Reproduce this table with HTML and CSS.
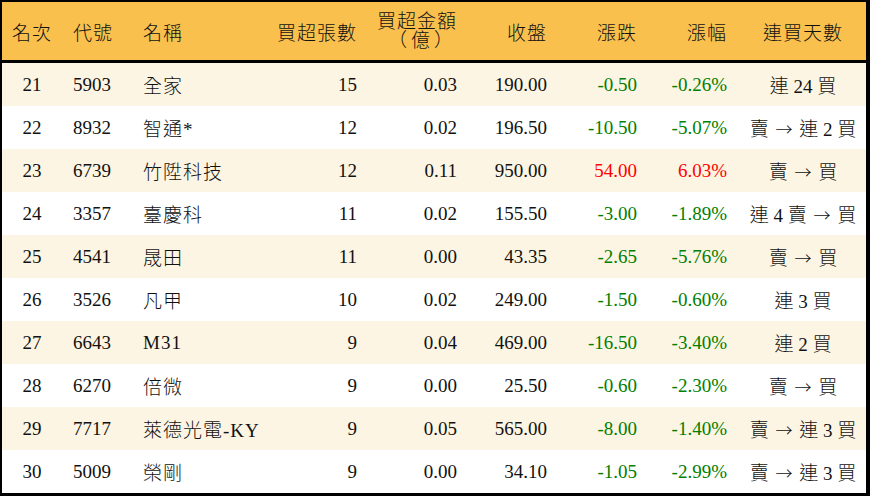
FILE: index.html
```html
<!DOCTYPE html>
<html lang="zh-Hant">
<head>
<meta charset="utf-8">
<title>買超排行</title>
<link rel="stylesheet" href="styles.css">
</head>
<body>
<div class="board">
  <div class="row head">
    <div class="c c1">名次</div>
    <div class="c c2">代號</div>
    <div class="c c3">名稱</div>
    <div class="c c4">買超張數</div>
    <div class="c c5 two"><span>買超金額</span><span class="unit">（億）</span></div>
    <div class="c c6">收盤</div>
    <div class="c c7">漲跌</div>
    <div class="c c8">漲幅</div>
    <div class="c c9">連買天數</div>
  </div>
  <div class="row alt">
    <div class="c c1">21</div><div class="c c2">5903</div><div class="c c3">全家</div><div class="c c4">15</div><div class="c c5">0.03</div><div class="c c6">190.00</div><div class="c c7 dn">-0.50</div><div class="c c8 dn">-0.26%</div><div class="c c9">連 24 買</div>
  </div>
  <div class="row">
    <div class="c c1">22</div><div class="c c2">8932</div><div class="c c3">智通*</div><div class="c c4">12</div><div class="c c5">0.02</div><div class="c c6">196.50</div><div class="c c7 dn">-10.50</div><div class="c c8 dn">-5.07%</div><div class="c c9">賣 <span class="arr">→</span> 連 2 買</div>
  </div>
  <div class="row alt">
    <div class="c c1">23</div><div class="c c2">6739</div><div class="c c3">竹陞科技</div><div class="c c4">12</div><div class="c c5">0.11</div><div class="c c6">950.00</div><div class="c c7 up">54.00</div><div class="c c8 up">6.03%</div><div class="c c9">賣 <span class="arr">→</span> 買</div>
  </div>
  <div class="row">
    <div class="c c1">24</div><div class="c c2">3357</div><div class="c c3">臺慶科</div><div class="c c4">11</div><div class="c c5">0.02</div><div class="c c6">155.50</div><div class="c c7 dn">-3.00</div><div class="c c8 dn">-1.89%</div><div class="c c9">連 4 賣 <span class="arr">→</span> 買</div>
  </div>
  <div class="row alt">
    <div class="c c1">25</div><div class="c c2">4541</div><div class="c c3">晟田</div><div class="c c4">11</div><div class="c c5">0.00</div><div class="c c6">43.35</div><div class="c c7 dn">-2.65</div><div class="c c8 dn">-5.76%</div><div class="c c9">賣 <span class="arr">→</span> 買</div>
  </div>
  <div class="row">
    <div class="c c1">26</div><div class="c c2">3526</div><div class="c c3">凡甲</div><div class="c c4">10</div><div class="c c5">0.02</div><div class="c c6">249.00</div><div class="c c7 dn">-1.50</div><div class="c c8 dn">-0.60%</div><div class="c c9">連 3 買</div>
  </div>
  <div class="row alt">
    <div class="c c1">27</div><div class="c c2">6643</div><div class="c c3">M31</div><div class="c c4">9</div><div class="c c5">0.04</div><div class="c c6">469.00</div><div class="c c7 dn">-16.50</div><div class="c c8 dn">-3.40%</div><div class="c c9">連 2 買</div>
  </div>
  <div class="row">
    <div class="c c1">28</div><div class="c c2">6270</div><div class="c c3">倍微</div><div class="c c4">9</div><div class="c c5">0.00</div><div class="c c6">25.50</div><div class="c c7 dn">-0.60</div><div class="c c8 dn">-2.30%</div><div class="c c9">賣 <span class="arr">→</span> 買</div>
  </div>
  <div class="row alt">
    <div class="c c1">29</div><div class="c c2">7717</div><div class="c c3">萊德光電-KY</div><div class="c c4">9</div><div class="c c5">0.05</div><div class="c c6">565.00</div><div class="c c7 dn">-8.00</div><div class="c c8 dn">-1.40%</div><div class="c c9">賣 <span class="arr">→</span> 連 3 買</div>
  </div>
  <div class="row">
    <div class="c c1">30</div><div class="c c2">5009</div><div class="c c3">榮剛</div><div class="c c4">9</div><div class="c c5">0.00</div><div class="c c6">34.10</div><div class="c c7 dn">-1.05</div><div class="c c8 dn">-2.99%</div><div class="c c9">賣 <span class="arr">→</span> 連 3 買</div>
  </div>
</div>
</body>
</html>
```
FILE: styles.css
```css
html, body {
  margin: 0;
  padding: 0;
  background: #ffffff;
}
.board {
  width: 870px;
  height: 496px;
  box-sizing: border-box;
  border-style: solid;
  border-color: #000;
  border-width: 2px 4px 3px 2px;
  font-family: "Liberation Serif", "Noto Sans CJK TC", serif;
  font-size: 19px;
  font-weight: 300;
  color: #111;
  display: flex;
  flex-direction: column;
}
.row {
  display: grid;
  grid-template-columns: 60px 70px 128px 107px 100px 90px 90px 90px 129px;
  height: 43px;
  align-items: center;
  background: #ffffff;
}
.row.alt {
  background: #fdf5e3;
}
.row.head {
  height: 58px;
  background: #f9c04e;
  border-bottom: 3px solid #000;
}
.head .c {
  letter-spacing: 1px;
}
.c {
  white-space: nowrap;
}
.c1 { text-align: center; }
.c2, .c3 { text-align: left; padding-left: 11px; }
.c4, .c5, .c6, .c7, .c8 { text-align: right; padding-right: 10px; }
.c9 { text-align: center; padding-left: 3px; }
.c3 { letter-spacing: 1px; }
.two {
  display: flex;
  flex-direction: column;
  align-items: flex-end;
  line-height: 19px;
}
.unit {
  letter-spacing: 4px;
}
.arr {
  font-family: "Noto Sans CJK TC", sans-serif;
  font-size: 17px;
  margin: 0 2px;
}
.dn { color: #008000; }
.up { color: #ff0000; }
```
